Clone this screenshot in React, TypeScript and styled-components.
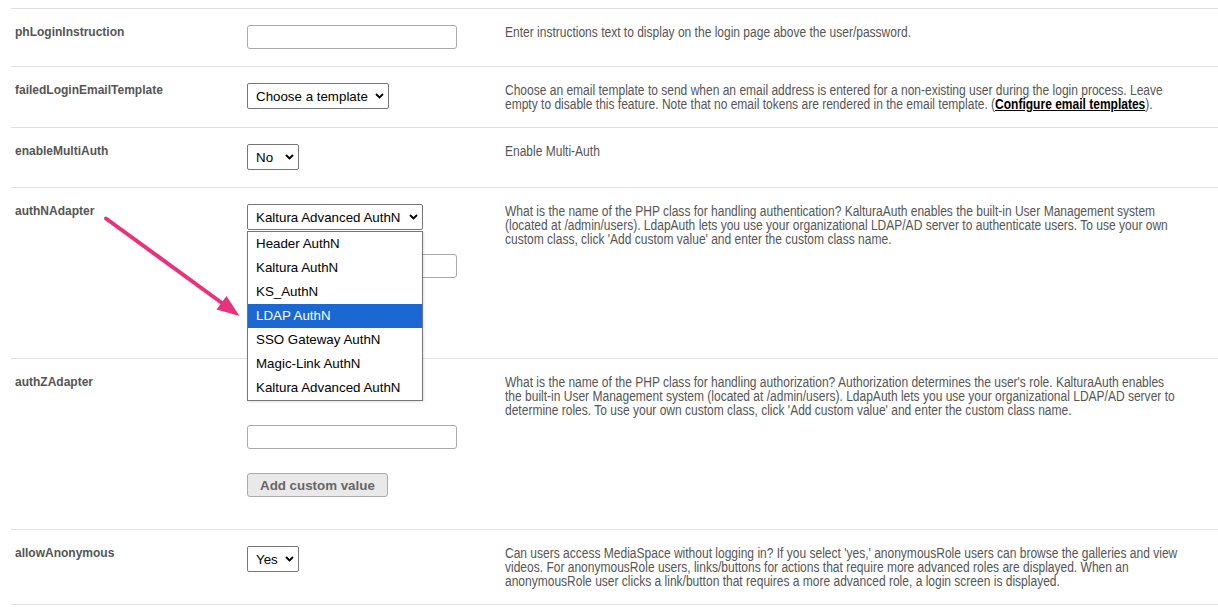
import React from "react";
import styled, { createGlobalStyle } from "styled-components";

const GlobalStyle = createGlobalStyle`
  html, body { margin: 0; padding: 0; background: #fff; }
  body { font-family: "Liberation Sans", Arial, sans-serif; }
  * { box-sizing: border-box; }
`;

const NARROW = 0.858;

const Page = styled.div`
  position: relative;
  padding: 8px 0 0 11px;
  overflow: hidden;
`;

const Table = styled.div`
  border-bottom: 1px solid #e1e1e1;
`;

const Row = styled.div`
  display: grid;
  grid-template-columns: 236px 258px 1fr;
  border-top: 1px solid #e1e1e1;
  padding: 16px 35px 16px 0;
`;

const Label = styled.div`
  padding-left: 4px;
  font: bold 12px/14px "Liberation Sans", Arial, sans-serif;
  color: #555;
`;

const Controls = styled.div`
  display: flex;
  flex-direction: column;
  align-items: flex-start;
  gap: 24px;
  padding-bottom: 1px;
`;

const Description = styled.div`
  min-width: 0;
  color: #555;
  font: 14px/14px "Liberation Sans", Arial, sans-serif;
`;

const NarrowText = styled.div`
  width: calc(100% / ${NARROW});
  transform: scaleX(${NARROW});
  transform-origin: 0 0;
`;

const Link = styled.a`
  color: #000;
  font-weight: bold;
  text-decoration: underline;
`;

const TextInput = styled.input`
  width: 210px;
  height: 24px;
  margin: 0;
  border: 1px solid #a9a9a9;
  border-radius: 3px;
  background: #fff;
  padding: 0 6px;
  font: 13.333px "Liberation Sans", Arial, sans-serif;
`;

const SelectWrap = styled.span<{ $open?: boolean }>`
  position: relative;
  display: inline-block;
  z-index: ${(p) => (p.$open ? 5 : "auto")};
`;

const NativeSelect = styled.select`
  appearance: none;
  -webkit-appearance: none;
  display: block;
  height: 26px;
  margin: 0;
  padding: 0 20px 0 8px;
  border: 1px solid #767676;
  border-radius: 2px;
  background: #fff;
  color: #000;
  font: 13.333px "Liberation Sans", Arial, sans-serif;
`;

const Chevron = styled.svg`
  position: absolute;
  right: 5px;
  top: 50%;
  transform: translateY(-50%);
  pointer-events: none;
`;

const OptionList = styled.ul`
  position: absolute;
  top: calc(100% + 1px);
  left: 0;
  right: 0;
  margin: 0;
  padding: 0;
  list-style: none;
  background: #fff;
  border: 1px solid #767676;
  box-shadow: 1px 1px 2px rgba(0, 0, 0, 0.12);
`;

const OptionItem = styled.li<{ $active?: boolean }>`
  height: 24px;
  padding-left: 8px;
  white-space: nowrap;
  font: 13.333px/24px "Liberation Sans", Arial, sans-serif;
  color: ${(p) => (p.$active ? "#fff" : "#000")};
  background: ${(p) => (p.$active ? "#1b68d3" : "transparent")};
`;

const CustomButton = styled.button`
  height: 24px;
  margin: 0 0 15px;
  padding: 0 12px;
  border: 1px solid #aaa;
  border-radius: 3px;
  background: #e9e9e9;
  color: #666;
  font: bold 13.333px "Liberation Sans", Arial, sans-serif;
`;

const ArrowSvg = styled.svg`
  position: absolute;
  left: 0;
  top: 0;
  pointer-events: none;
  z-index: 10;
`;

type SelectProps = {
  value: string;
  options: string[];
  open?: boolean;
  active?: string;
};

function Select({ value, options, open, active }: SelectProps) {
  return (
    <SelectWrap $open={open}>
      <NativeSelect defaultValue={value}>
        {options.map((o) => (
          <option key={o} value={o}>
            {o}
          </option>
        ))}
      </NativeSelect>
      <Chevron width="9" height="6" viewBox="0 0 9 6">
        <path d="M1 1 L4.5 4.5 L8 1" fill="none" stroke="#000" strokeWidth="1.8" />
      </Chevron>
      {open && (
        <OptionList>
          {options.map((o) => (
            <OptionItem key={o} $active={o === active}>
              {o}
            </OptionItem>
          ))}
        </OptionList>
      )}
    </SelectWrap>
  );
}

function Desc({ children }: { children: React.ReactNode }) {
  return (
    <Description>
      <NarrowText>{children}</NarrowText>
    </Description>
  );
}

const authNOptions = [
  "Header AuthN",
  "Kaltura AuthN",
  "KS_AuthN",
  "LDAP AuthN",
  "SSO Gateway AuthN",
  "Magic-Link AuthN",
  "Kaltura Advanced AuthN",
];

export default function App() {
  return (
    <>
      <GlobalStyle />
      <Page>
        <Table>
          <Row>
            <Label>phLoginInstruction</Label>
            <Controls>
              <TextInput type="text" />
            </Controls>
            <Desc>Enter instructions text to display on the login page above the user/password.</Desc>
          </Row>
          <Row>
            <Label>failedLoginEmailTemplate</Label>
            <Controls>
              <Select value="Choose a template" options={["Choose a template"]} />
            </Controls>
            <Desc>
              Choose an email template to send when an email address is entered for a
              non-existing user during the login process. Leave empty to disable this feature.
              Note that no email tokens are rendered in the email template. (
              <Link href="#">Configure email templates</Link>).
            </Desc>
          </Row>
          <Row>
            <Label>enableMultiAuth</Label>
            <Controls>
              <Select value="No" options={["No", "Yes"]} />
            </Controls>
            <Desc>Enable Multi-Auth</Desc>
          </Row>
          <Row>
            <Label>authNAdapter</Label>
            <Controls>
              <Select
                value="Kaltura Advanced AuthN"
                options={authNOptions}
                open
                active="LDAP AuthN"
              />
              <TextInput type="text" />
              <CustomButton type="button">Add custom value</CustomButton>
            </Controls>
            <Desc>
              What is the name of the PHP class for handling authentication? KalturaAuth enables
              the built-in User Management system (located at /admin/users). LdapAuth lets you
              use your organizational LDAP/AD server to authenticate users. To use your own
              custom class, click 'Add custom value' and enter the custom class name.
            </Desc>
          </Row>
          <Row>
            <Label>authZAdapter</Label>
            <Controls>
              <Select
                value="Kaltura Group AuthZ"
                options={["Kaltura AuthZ", "LDAP AuthZ", "Kaltura Group AuthZ"]}
              />
              <TextInput type="text" />
              <CustomButton type="button">Add custom value</CustomButton>
            </Controls>
            <Desc>
              What is the name of the PHP class for handling authorization? Authorization
              determines the user's role. KalturaAuth enables the built-in User Management system
              (located at /admin/users). LdapAuth lets you use your organizational LDAP/AD server
              to determine roles. To use your own custom class, click 'Add custom value' and
              enter the custom class name.
            </Desc>
          </Row>
          <Row>
            <Label>allowAnonymous</Label>
            <Controls>
              <Select value="Yes" options={["Yes", "No"]} />
            </Controls>
            <Desc>
              Can users access MediaSpace without logging in? If you select 'yes,' anonymousRole
              users can browse the galleries and view videos. For anonymousRole users,
              links/buttons for actions that require more advanced roles are displayed. When an
              anonymousRole user clicks a link/button that requires a more advanced role, a login
              screen is displayed.
            </Desc>
          </Row>
        </Table>
        <ArrowSvg width="260" height="340" viewBox="0 0 260 340">
          <line x1="106" y1="218.5" x2="224" y2="304.5" stroke="#e8327c" strokeWidth="4" strokeLinecap="round" />
          <polygon points="239.5,316 216.5,309.5 226.5,296" fill="#e8327c" />
        </ArrowSvg>
      </Page>
    </>
  );
}
